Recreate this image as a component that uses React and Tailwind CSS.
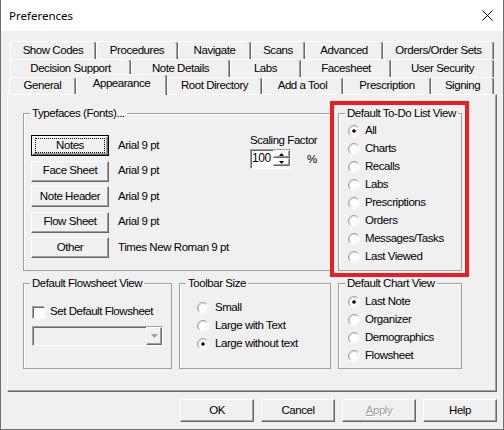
import React from 'react';

const raised =
  'border border-t-white border-l-white border-r-[#696969] border-b-[#696969] shadow-[inset_-1px_-1px_0_#a0a0a0]';
const sunken =
  'border border-t-[#a0a0a0] border-l-[#a0a0a0] border-r-white border-b-white shadow-[inset_1px_1px_0_#696969]';

const row1 = [
  ['Show Codes', 'w-[86px]'],
  ['Procedures', 'w-[82px]'],
  ['Navigate', 'w-[73px]'],
  ['Scans', 'w-[54px]'],
  ['Advanced', 'w-[78px]'],
  ['Orders/Order Sets', 'w-[111px]'],
];
const row2 = [
  ['Decision Support', 'w-[121px]'],
  ['Note Details', 'w-[99px]'],
  ['Labs', 'w-[71px]'],
  ['Facesheet', 'w-[90px]'],
  ['User Security', 'w-[103px]'],
];

const todo = ['All', 'Charts', 'Recalls', 'Labs', 'Prescriptions', 'Orders', 'Messages/Tasks', 'Last Viewed'];
const fonts = [
  ['Notes', 'Arial 9 pt'],
  ['Face Sheet', 'Arial 9 pt'],
  ['Note Header', 'Arial 9 pt'],
  ['Flow Sheet', 'Arial 9 pt'],
  ['Other', 'Times New Roman 9 pt'],
];

function Tab({ label, w }) {
  return (
    <div
      className={`${w} flex h-full shrink-0 items-center justify-center rounded-t-[3px] border-t border-l border-r border-t-white border-l-white border-r-[#696969] bg-[#f0f0f0] shadow-[inset_-1px_0_0_#a0a0a0]`}
    >
      {label}
    </div>
  );
}

function Radio({ checked }) {
  return (
    <svg width="12" height="12" viewBox="0 0 12 12" className="shrink-0">
      <circle cx="6" cy="6" r="5" fill="#fff" />
      <path d="M2.11 9.89A5.5 5.5 0 0 1 9.89 2.11" fill="none" stroke="#a0a0a0" />
      <path d="M9.89 2.11A5.5 5.5 0 0 1 2.11 9.89" fill="none" stroke="#fff" />
      <path d="M2.82 9.18A4.5 4.5 0 0 1 9.18 2.82" fill="none" stroke="#d4d4d4" />
      <path d="M9.18 2.82A4.5 4.5 0 0 1 2.82 9.18" fill="none" stroke="#f4f4f4" />
      {checked && <circle cx="6" cy="6" r="1.8" fill="#000" />}
    </svg>
  );
}

function RadioRow({ label, checked, gap = 'ml-[5px]' }) {
  return (
    <div className="flex h-[18px] items-center">
      <Radio checked={checked} />
      <span className={gap}>{label}</span>
    </div>
  );
}

function Group({ title, className, children }) {
  return (
    <fieldset className={`${className} shrink-0 border border-[#a0a0a0] shadow-[inset_1px_1px_0_#fff]`}>
      <legend className="ml-[6px] px-[2px] leading-[14px]">{title}</legend>
      {children}
    </fieldset>
  );
}

function Button({ children, className = '' }) {
  return (
    <div className={`${raised} flex items-center justify-center ${className}`}>{children}</div>
  );
}

export default function App() {
  return (
    <div className="h-[430px] w-[504px] overflow-hidden border-x border-b border-[#6f6f6f] bg-[#f0f0f0] font-['Liberation_Sans',Arial,sans-serif] text-[11.5px] tracking-[-0.45px] text-black">
      {/* title bar */}
      <div className="flex h-[31px] items-center justify-between bg-white pl-[8px] pr-[10px]">
        <span className="font-['Noto_Sans',sans-serif] text-[11.5px] tracking-normal">Preferences</span>
        <svg width="11" height="11" viewBox="0 0 11 11">
          <path d="M0.5 0.5L10.5 10.5M10.5 0.5L0.5 10.5" stroke="#000" strokeWidth="1" />
        </svg>
      </div>

      <div className="px-[6px] pb-[7px]">
        {/* tabs */}
        <div className="mt-[10px] flex flex-col">
          <div className="ml-[3px] flex h-[18px]">
            {row1.map(([l, w]) => (
              <Tab key={l} label={l} w={w} />
            ))}
          </div>
          <div className="ml-[3px] flex h-[18px]">
            {row2.map(([l, w]) => (
              <Tab key={l} label={l} w={w} />
            ))}
          </div>
          <div className="ml-[2px] flex h-[17px] items-end">
            <Tab label="General" w="w-[67px]" />
            <div className="relative z-10 -mb-px flex h-[21px] w-[91px] shrink-0 justify-center rounded-t-[3px] border-t border-l border-r border-t-white border-l-white border-r-[#696969] bg-[#f0f0f0] leading-[16px] shadow-[inset_-1px_0_0_#a0a0a0]">
              Appearance
            </div>
            <Tab label="Root Directory" w="w-[95px]" />
            <Tab label="Add a Tool" w="w-[81px]" />
            <Tab label="Prescription" w="w-[88px]" />
            <Tab label="Signing" w="w-[63px]" />
          </div>
        </div>

        {/* panel */}
        <div className={`relative h-[298px] ${raised} pt-[11px] pl-[15px]`}>
          <div className="flex">
            <Group title="Typefaces (Fonts)..." className="h-[165px] w-[308px]">
              <div className="flex pt-[13px] pl-[7px]">
                <div className="mt-[2px] flex w-[219px] flex-col gap-[4.5px]">
                  {fonts.map(([b, f], i) => (
                    <div key={b} className="flex h-[21px] items-center">
                      {i === 0 ? (
                        <div className="h-[21px] w-[78px] shrink-0 border border-black">
                          <div className={`relative flex h-full items-center justify-center ${raised}`}>
                            Notes
                            <span className="absolute inset-x-[2px] inset-y-[1px] border border-dotted border-black" />
                          </div>
                        </div>
                      ) : (
                        <Button className="h-[21px] w-[78px] shrink-0">{b}</Button>
                      )}
                      <span className="ml-[9px] whitespace-nowrap">{f}</span>
                    </div>
                  ))}
                </div>
                <div className="flex flex-col">
                  <span className="leading-[14px]">Scaling Factor</span>
                  <div className="mt-[2px] flex items-center">
                    <div className={`flex h-[20px] w-[41px] bg-white ${sunken}`}>
                      <span className="flex-1 pl-[1px] text-[12px] leading-[16px]">100</span>
                      <div className="flex w-[17px] flex-col">
                        <Button className="h-[8px]">
                          <svg width="5" height="3" viewBox="0 0 5 3">
                            <path d="M2.5 0L5 3H0z" fill="#000" />
                          </svg>
                        </Button>
                        <Button className="h-[8px]">
                          <svg width="5" height="3" viewBox="0 0 5 3">
                            <path d="M0 0H5L2.5 3z" fill="#000" />
                          </svg>
                        </Button>
                      </div>
                    </div>
                    <span className="ml-[16px] mt-[2px]">%</span>
                  </div>
                </div>
              </div>
            </Group>

            <Group title="Default To-Do List View" className="ml-[7px] h-[165px] w-[124px]">
              <div className="flex flex-col pt-[2px] pl-[9px]">
                {todo.map((t, i) => (
                  <RadioRow key={t} label={t} checked={i === 0} />
                ))}
              </div>
            </Group>
          </div>

          <div className="mt-[5px] flex">
            <Group title="Default Flowsheet View" className="h-[93px] w-[149px]">
              <div className="flex flex-col pt-[13px] pl-[8px]">
                <div className="flex h-[18px] items-center">
                  <span className={`h-[13px] w-[13px] shrink-0 bg-white ${sunken}`} />
                  <span className="ml-[5px]">Set Default Flowsheet</span>
                </div>
                <div className={`mt-[5px] flex h-[20px] w-[131px] justify-end ${sunken}`}>
                  <Button className="h-full w-[16px]">
                    <svg width="7" height="4" viewBox="0 0 7 4">
                      <path d="M0 0H7L3.5 4z" fill="#a0a0a0" />
                    </svg>
                  </Button>
                </div>
              </div>
            </Group>

            <Group title="Toolbar Size" className="ml-[7px] h-[93px] w-[152px]">
              <div className="flex flex-col pt-[9px] pl-[17px]">
                <RadioRow label="Small" gap="ml-[6px]" />
                <RadioRow label="Large with Text" gap="ml-[6px]" />
                <RadioRow label="Large without text" checked gap="ml-[6px]" />
              </div>
            </Group>

            <Group title="Default Chart View" className="ml-[7px] h-[93px] w-[124px]">
              <div className="flex flex-col pt-[3px] pl-[9px]">
                <RadioRow label="Last Note" checked />
                <RadioRow label="Organizer" />
                <RadioRow label="Demographics" />
                <RadioRow label="Flowsheet" />
              </div>
            </Group>
          </div>

          {/* red highlight annotation */}
          <div className="pointer-events-none absolute top-[6px] left-[322px] z-20 h-[176px] w-[139px] border-4 border-[#ed1c24]" />
        </div>

        {/* dialog buttons */}
        <div className="mt-[7px] flex justify-end gap-[7px]">
          <Button className="h-[23px] w-[74px]">OK</Button>
          <Button className="h-[23px] w-[74px]">Cancel</Button>
          <Button className="h-[23px] w-[74px] text-[#a0a0a0] [text-shadow:1px_1px_0_#fff]">
            <span className="underline">A</span>pply
          </Button>
          <Button className="h-[23px] w-[74px]">Help</Button>
        </div>
      </div>
    </div>
  );
}
